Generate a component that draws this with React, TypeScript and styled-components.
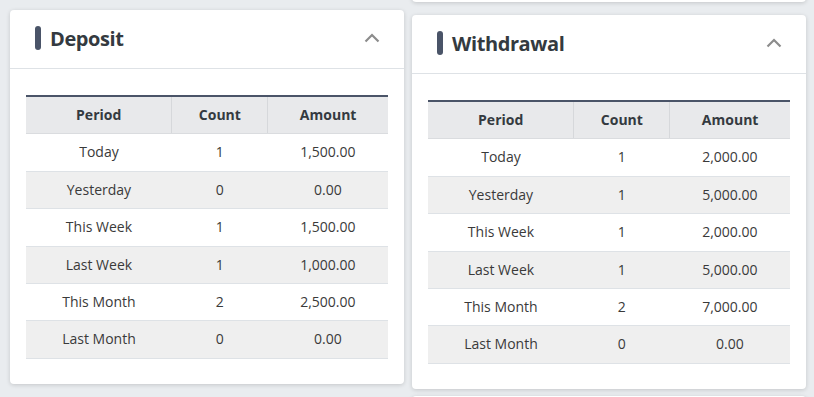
import React from "react";
import styled, { createGlobalStyle } from "styled-components";

type Row = { period: string; count: number; amount: string };

const deposits: Row[] = [
  { period: "Today", count: 1, amount: "1,500.00" },
  { period: "Yesterday", count: 0, amount: "0.00" },
  { period: "This Week", count: 1, amount: "1,500.00" },
  { period: "Last Week", count: 1, amount: "1,000.00" },
  { period: "This Month", count: 2, amount: "2,500.00" },
  { period: "Last Month", count: 0, amount: "0.00" },
];

const withdrawals: Row[] = [
  { period: "Today", count: 1, amount: "2,000.00" },
  { period: "Yesterday", count: 1, amount: "5,000.00" },
  { period: "This Week", count: 1, amount: "2,000.00" },
  { period: "Last Week", count: 1, amount: "5,000.00" },
  { period: "This Month", count: 2, amount: "7,000.00" },
  { period: "Last Month", count: 0, amount: "0.00" },
];

const SummaryCard = ({ title, rows }: { title: string; rows: Row[] }) => (
  <Card>
    <CardHeader>
      <Title>
        <TitleBar />
        {title}
      </Title>
      <Toggle viewBox="0 0 16 10" aria-hidden>
        <polyline points="1.5,8.5 8,2 14.5,8.5" />
      </Toggle>
    </CardHeader>
    <CardBody>
      <Table>
        <colgroup>
          <col style={{ width: "40.3%" }} />
          <col style={{ width: "26.5%" }} />
          <col style={{ width: "33.2%" }} />
        </colgroup>
        <thead>
          <tr>
            <Th>Period</Th>
            <Th>Count</Th>
            <Th>Amount</Th>
          </tr>
        </thead>
        <tbody>
          {rows.map((r, i) => (
            <Tr key={r.period} $striped={i % 2 === 1}>
              <Td>{r.period}</Td>
              <Td>{r.count}</Td>
              <Td>{r.amount}</Td>
            </Tr>
          ))}
        </tbody>
      </Table>
    </CardBody>
  </Card>
);

const App = () => (
  <>
    <GlobalStyle />
    <Page>
      <Column>
        <SummaryCard title="Deposit" rows={deposits} />
      </Column>
      <RightColumn>
        <StubCard />
        <SummaryCard title="Withdrawal" rows={withdrawals} />
        <StubCard />
      </RightColumn>
    </Page>
  </>
);

export default App;

const GlobalStyle = createGlobalStyle`
  html, body {
    margin: 0;
    background: #e9ecef;
    font-family: "Open Sans", "Noto Sans", sans-serif;
    color: #333;
    overflow: hidden;
  }
`;

const Page = styled.div`
  display: grid;
  grid-template-columns: 394px 394px;
  column-gap: 8px;
  padding-left: 10px;
  height: 397px;
  overflow: hidden;
`;

const Column = styled.div`
  padding-top: 10px;
`;

const RightColumn = styled.div`
  display: flex;
  flex-direction: column;
  margin-top: -18px;
  & > :nth-child(2) {
    margin: 13px 0 7px;
  }
`;

const Card = styled.div`
  background: #fff;
  border-radius: 4px;
  box-shadow: 0 1px 4px rgba(0, 0, 0, 0.16);
`;

const StubCard = styled(Card)`
  height: 20px;
  flex-shrink: 0;
`;

const CardHeader = styled.div`
  display: flex;
  align-items: center;
  justify-content: space-between;
  height: 59px;
  padding: 0 24px 2px 25px;
  border-bottom: 1px solid #dee2e6;
  box-sizing: border-box;
`;

const Title = styled.h3`
  display: flex;
  align-items: center;
  gap: 9px;
  margin: 0;
  font-size: 20px;
  font-weight: 700;
  color: #343a40;
  letter-spacing: -0.4px;
`;

const TitleBar = styled.span`
  display: block;
  width: 6px;
  height: 24px;
  border-radius: 3px;
  background: #4a5468;
`;

const Toggle = styled.svg`
  width: 16px;
  height: 10px;
  fill: none;
  stroke: #8c8c8c;
  stroke-width: 2.2;
`;

const CardBody = styled.div`
  padding: 26px 16px 25px;
`;

const Table = styled.table`
  width: 100%;
  border-collapse: collapse;
  table-layout: fixed;
  font-size: 14px;
  border-top: 2px solid #4a5468;
`;

const Th = styled.th`
  padding: 8px;
  line-height: 20.4px;
  font-weight: 700;
  text-align: center;
  background: #e8e9eb;
  color: #343a40;
  border-bottom: 1px solid #dadcdf;
  & + & {
    border-left: 1px solid #d6d8db;
  }
`;

const Tr = styled.tr<{ $striped: boolean }>`
  background: ${(p) => (p.$striped ? "#efefef" : "#fff")};
`;

const Td = styled.td`
  padding: 8px;
  line-height: 20.4px;
  text-align: center;
  color: #3a3a3a;
  border-bottom: 1px solid #dee2e6;
`;
